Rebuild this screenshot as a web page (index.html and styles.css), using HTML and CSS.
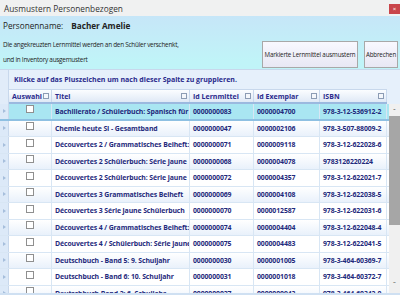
FILE: index.html
```html
<!DOCTYPE html>
<html lang="de">
<head>
    <meta charset="UTF-8">
    <title>Ausmustern Personenbezogen</title>
    <link rel="stylesheet" href="styles.css">
</head>
<body>
    <div class="window">
        <div class="titlebar">
            <span class="title">Ausmustern Personenbezogen</span>
            <span class="close">&#215;</span>
        </div>

        <div class="content">
            <div class="person">
                <span class="label">Personenname:</span>
                <span class="name">Bacher Amelie</span>
            </div>
            <div class="info-row">
                <div class="info">
                    <p>Die angekreuzten Lernmittel werden an den Schüler verschenkt,</p>
                    <p>und in Inventory ausgemustert</p>
                </div>
                <button class="btn btn-main">Markierte Lernmittel ausmustern</button>
                <button class="btn btn-cancel">Abbrechen</button>
            </div>

            <div class="grid">
                <div class="group-row">
                    <div class="indicator-top"></div>
                    <div class="group-panel">Klicke auf das Pluszeichen um nach dieser Spalte zu gruppieren.</div>
                </div>
                <div class="head-row">
                    <div class="indicator-top"></div>
                    <div class="cols head">
                        <div class="hcell">Auswahl <i class="hbox"></i></div>
                        <div class="hcell">Titel <i class="hbox"></i></div>
                        <div class="hcell">Id Lernmittel <i class="hbox"></i></div>
                        <div class="hcell">Id Exemplar <i class="hbox"></i></div>
                        <div class="hcell">ISBN <i class="hbox"></i></div>
                    </div>
                    <div class="head-rest"></div>
                </div>
                <div class="body">
                    <div class="rows" id="rows"></div>
                    <div class="scrollbar">
                        <span class="arrow">&#710;</span>
                        <div class="track"><div class="thumb"></div></div>
                        <span class="arrow down">&#711;</span>
                    </div>
                </div>
            </div>
        </div>
    </div>

    <script>
        const books = [
            ['Bachillerato / Schülerbuch: Spanisch für die', '0000000083', '0000004700', '978-3-12-536912-2'],
            ['Chemie heute SI - Gesamtband', '0000000047', '0000002106', '978-3-507-88009-2'],
            ['Découvertes 2 / Grammatisches Beiheft: Série', '0000000071', '0000009118', '978-3-12-622028-6'],
            ['Découvertes 2 Schülerbuch: Série jaune', '0000000068', '0000004078', '9783126220224'],
            ['Découvertes 2 Schülerbuch: Série jaune', '0000000072', '0000004357', '978-3-12-622021-7'],
            ['Découvertes 3 Grammatisches Beiheft', '0000000069', '0000004108', '978-3-12-622038-5'],
            ['Découvertes 3 Série jaune Schülerbuch', '0000000070', '0000012587', '978-3-12-622031-6'],
            ['Découvertes 4 / Grammatisches Beiheft: Série', '0000000074', '0000004404', '978-3-12-622048-4'],
            ['Découvertes 4 / Schülerbuch: Série jaune', '0000000075', '0000004483', '978-3-12-622041-5'],
            ['Deutschbuch - Band 5: 9. Schuljahr', '0000000030', '0000001005', '978-3-464-60369-7'],
            ['Deutschbuch - Band 6: 10. Schuljahr', '0000000031', '0000001018', '978-3-464-60372-7'],
            ['Deutschbuch Band 2: 6. Schuljahr', '0000000027', '0000000943', '978-3-464-60342-0']
        ];

        const rows = document.getElementById('rows');
        books.forEach(function (b, i) {
            const row = document.createElement('div');
            row.className = 'row' + (i === 0 ? ' selected' : (i % 2 ? ' alt' : ''));
            row.innerHTML = `
                <div class="indicator"><span class="tri"></span></div>
                <div class="cols">
                    <div class="cell check"><i class="cbox"></i></div>
                    <div class="cell">${b[0]}</div>
                    <div class="cell">${b[1]}</div>
                    <div class="cell">${b[2]}</div>
                    <div class="cell">${b[3]}</div>
                </div>
                <div class="row-rest"></div>
            `;
            rows.appendChild(row);
        });
    </script>
</body>
</html>
```

FILE: styles.css
```css
body {
    margin: 0;
    font-family: "Open Sans", "Noto Sans", sans-serif;
    background: #fff;
}

.window {
    width: 400px;
    height: 295px;
    overflow: hidden;
    display: flex;
    flex-direction: column;
}

.titlebar {
    height: 16px;
    flex: none;
    background: #f0f1f1;
    display: flex;
    align-items: center;
    justify-content: space-between;
    padding-left: 4px;
    font-size: 8.3px;
    color: #333;
}

.close {
    width: 11px;
    height: 10px;
    margin-top: 2px;
    background: #c9454a;
    color: #fff;
    font-size: 6px;
    line-height: 10px;
    text-align: center;
}

.content {
    flex: 1;
    display: flex;
    flex-direction: column;
    background: linear-gradient(180deg, #c6e6f8 0%, #c0f4f8 45px, #bff6f8 100%);
    min-height: 0;
}

.person {
    height: 18px;
    flex: none;
    padding-left: 3px;
    display: flex;
    align-items: center;
    font-size: 8.2px;
    color: #222;
}

.person .name {
    margin-left: 8px;
    font-weight: bold;
}

.info-row {
    display: flex;
    align-items: flex-start;
    height: 35px;
    flex: none;
    overflow: hidden;
}

.info {
    flex: 1;
    padding: 6px 0 0 3px;
    font-size: 6.4px;
    letter-spacing: -0.25px;
    color: #222;
}

.info p {
    margin: 0 0 5.5px;
    line-height: 9px;
}

.btn {
    height: 27px;
    margin-top: 7px;
    border: 1px solid #a8a8a8;
    background: linear-gradient(180deg, #f8f8ff, #e8e8f4);
    font-family: inherit;
    font-size: 6.2px;
    letter-spacing: -0.15px;
    color: #222;
    padding: 0;
    white-space: nowrap;
}

.btn-main {
    width: 96px;
    margin-right: 6px;
}

.btn-cancel {
    width: 34px;
    margin-right: 2px;
}

.grid {
    flex: 1;
    display: flex;
    flex-direction: column;
    background: #fff;
    min-height: 0;
    border-bottom: 2px solid #cfe0f2;
}

.group-row,
.head-row {
    display: flex;
    flex: none;
}

.indicator-top {
    width: 9px;
    background: #e1ecf9;
    border-right: 1px solid #c8d8ec;
    border-top: 1px solid #c8d8ec;
    box-sizing: border-box;
}

.head-row .indicator-top {
    border-top: none;
}

.group-panel {
    flex: 1;
    height: 20px;
    box-sizing: border-box;
    background: #e6f0fb;
    border-top: 1px solid #c8d8ec;
    padding-left: 5px;
    display: flex;
    align-items: center;
    font-size: 7px;
    font-weight: bold;
    color: #2a2a8c;
}

.cols {
    display: grid;
    grid-template-columns: 43px 138px 64px 66px 67px;
}

.head {
    height: 15px;
    box-sizing: border-box;
    background: linear-gradient(180deg, #fbfdff, #dfe9f6);
    border-top: 1px solid #c8d8ec;
    border-bottom: 2px solid #9bb9df;
}

.head-rest {
    flex: 1;
    background: #e6f0fb;
}

.hcell {
    display: flex;
    align-items: center;
    justify-content: space-between;
    padding: 0 2px 0 3px;
    border-right: 1px solid #c8d8ec;
    font-size: 7px;
    font-weight: bold;
    color: #2a2a8c;
    white-space: nowrap;
}

.hbox {
    width: 4px;
    height: 4px;
    border: 1px solid #8c9cb4;
    background: #f4f7fb;
}

.body {
    flex: 1;
    display: flex;
    min-height: 0;
}

.rows {
    flex: 1;
    overflow: hidden;
}

.row {
    height: 16.5px;
    display: flex;
    background: #fff;
    border-bottom: 1px solid #d8e6f4;
    box-sizing: border-box;
}

.row.alt {
    background: linear-gradient(180deg, #ffffff, #e9f1fb);
}

.row.selected {
    background: #a9e6f2;
    border-bottom: 2px solid #8ec0e2;
}

.indicator {
    width: 9px;
    flex: none;
    background: #dce9f8;
    border-right: 1px solid #c8d8ec;
    box-sizing: border-box;
    display: flex;
    align-items: center;
    justify-content: center;
}

.tri {
    width: 0;
    height: 0;
    border-top: 2.5px solid transparent;
    border-bottom: 2.5px solid transparent;
    border-left: 3px solid #a6bedc;
}

.cell {
    display: flex;
    align-items: center;
    padding-left: 3px;
    border-right: 1px solid #d8e6f4;
    font-size: 6.9px;
    letter-spacing: -0.1px;
    font-weight: bold;
    color: #1f2a7c;
    white-space: nowrap;
    overflow: hidden;
}

.cell.check {
    justify-content: center;
    padding: 0 0 4px 0;
}

.cbox {
    width: 6px;
    height: 6px;
    border: 1px solid #8f8f8f;
    background: #fff;
}

.row-rest {
    flex: 1;
}

.scrollbar {
    width: 11px;
    flex: none;
    background: #f0f0f0;
    display: flex;
    flex-direction: column;
    align-items: center;
}

.arrow {
    height: 12px;
    flex: none;
    font-size: 8px;
    line-height: 14px;
    color: #606060;
}

.arrow.down {
    line-height: 6px;
}

.track {
    flex: 1;
    width: 100%;
}

.thumb {
    height: 109px;
    background: #a6a6a6;
}
```
